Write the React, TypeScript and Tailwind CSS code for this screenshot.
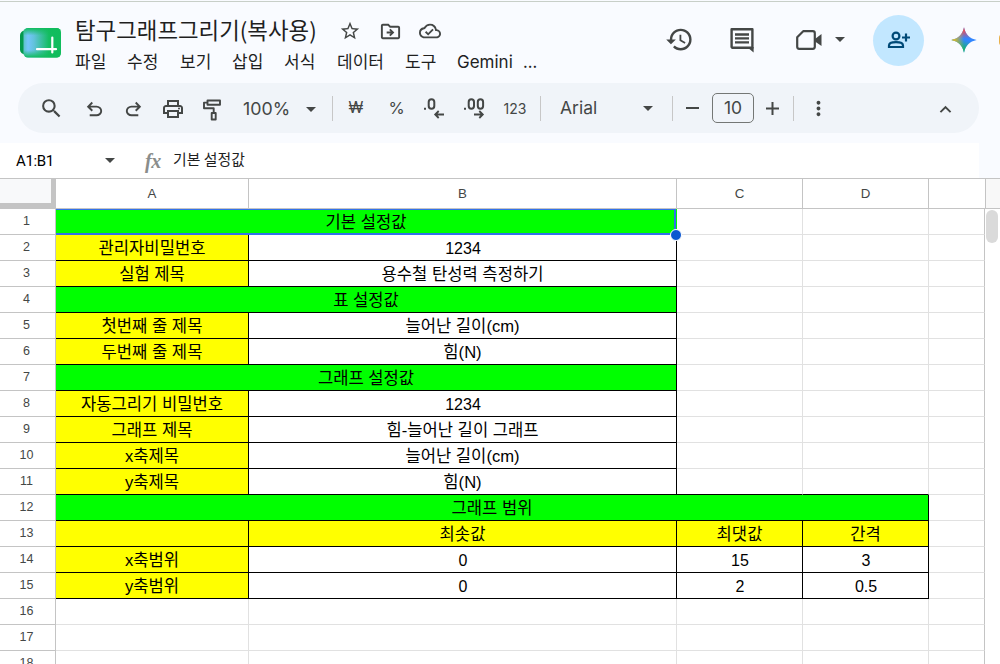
import type { ReactNode } from "react";
import clsx from "clsx";
import {
    MdArrowDropDown,
    MdHistory,
    MdKeyboardArrowUp,
    MdMoreVert,
    MdOutlineCloudDone,
    MdOutlineDriveFileMove,
    MdOutlinePrint,
    MdSearch,
    MdStarBorder,
} from "react-icons/md";

const menus = [
    { label: "파일", width: "w-[52px]" },
    { label: "수정", width: "w-[53px]" },
    { label: "보기", width: "w-[52px]" },
    { label: "삽입", width: "w-[52px]" },
    { label: "서식", width: "w-[53px]" },
    { label: "데이터", width: "w-[68px]" },
    { label: "도구", width: "w-[52px]" },
];

type CellData = { text?: string; fill?: "green" | "yellow"; span?: number; box?: boolean };

const title = (text: string, span = 2): CellData => ({ text, fill: "green", span, box: true });
const label = (text: string): CellData => ({ text, fill: "yellow", box: true });
const value = (text: string): CellData => ({ text, box: true });

// columns that a row does not list stay blank
const rows: CellData[][] = [
    [title("기본 설정값")],
    [label("관리자비밀번호"), value("1234")],
    [label("실험 제목"), value("용수철 탄성력 측정하기")],
    [title("표 설정값")],
    [label("첫번째 줄 제목"), value("늘어난 길이(cm)")],
    [label("두번째 줄 제목"), value("힘(N)")],
    [title("그래프 설정값")],
    [label("자동그리기 비밀번호"), value("1234")],
    [label("그래프 제목"), value("힘-늘어난 길이 그래프")],
    [label("x축제목"), value("늘어난 길이(cm)")],
    [label("y축제목"), value("힘(N)")],
    [title("그래프 범위", 4)],
    [label(""), label("최솟값"), label("최댓값"), label("간격")],
    [label("x축범위"), value("0"), value("15"), value("3")],
    [label("y축범위"), value("0"), value("2"), value("0.5")],
    [],
    [],
    [],
];

const gridCols = "grid grid-cols-[56px_193px_428px_126px_126px_56px]";

const countColumns = (cells: CellData[] = []) => cells.reduce((sum, cell) => sum + (cell.span ?? 1), 0);

const Slot = ({ className, children }: { className: string; children?: ReactNode }) => (
    <div className={clsx("flex h-full shrink-0 items-center justify-center", className)}>{children}</div>
);

const Divider = () => <div className="h-[25px] w-px shrink-0 bg-[#c7c7c7]" />;

const Caret = () => (
    <svg width="10" height="5" viewBox="0 0 10 5" fill="#444746">
        <path d="M0 0h10L5 5z" />
    </svg>
);

const Logo = () => (
    <svg width="42" height="32" viewBox="0 0 42 32">
        <defs>
            <linearGradient id="sheet" x1="0" x2="1" y1="0" y2="0">
                <stop offset="0" stopColor="#5cc3c8" />
                <stop offset=".12" stopColor="#74c5fb" />
                <stop offset=".28" stopColor="#62c2dc" />
                <stop offset=".68" stopColor="#13bd60" />
                <stop offset="1" stopColor="#11bc5c" />
            </linearGradient>
            <linearGradient id="edge" x1="0" x2="0" y1="0" y2="1">
                <stop offset="0" stopColor="#11bc5c" />
                <stop offset=".25" stopColor="#11bc5c" stopOpacity="0" />
                <stop offset=".75" stopColor="#11bc5c" stopOpacity="0" />
                <stop offset="1" stopColor="#11bc5c" />
            </linearGradient>
        </defs>
        <rect x="0" y="3.5" width="20" height="24" rx="5" fill="#04994e" />
        <rect x="3.5" y="1" width="37.5" height="29.5" rx="4.5" fill="url(#sheet)" />
        <rect x="3.5" y="1" width="37.5" height="29.5" rx="4.5" fill="url(#edge)" />
        <path d="M17 22.2h19M32.3 10.5v15" stroke="#fff" strokeWidth="2.2" strokeLinecap="round" />
    </svg>
);

const Header = () => {
    return (
        <header className="flex h-20 overflow-hidden border-t border-transparent">
            <div className="w-[75px] shrink-0 pl-5 pt-[26px]">
                <Logo />
            </div>
            <div className="w-[584px] shrink-0">
                <div className="flex h-12 items-center pt-2">
                    <h1 className="w-[264px] whitespace-nowrap pb-px text-[22.4px] leading-7 text-[#1f1f1f]">탐구그래프그리기(복사용)</h1>
                    <div className="flex gap-[17.5px] pt-1 text-[#444746]">
                        <MdStarBorder size={22} />
                        <MdOutlineDriveFileMove size={23} />
                        <MdOutlineCloudDone size={22} />
                    </div>
                </div>
                <nav className="flex whitespace-nowrap text-[17px] leading-6 text-[#1f1f1f]">
                    {menus.map((menu) => (
                        <span key={menu.label} className={menu.width}>{menu.label}</span>
                    ))}
                    <span className="w-[66px] pt-px font-['Inter',sans-serif] text-[17px]">Gemini</span>
                    <span>...</span>
                </nav>
            </div>
            <div className="flex h-[78px] grow items-center text-[#444746]">
                <Slot className="w-10 pb-0.5"><MdHistory size={29} /></Slot>
                <Slot className="w-[85px]">
                    <svg width="26" height="26" viewBox="0 0 26 26" fill="none" stroke="currentColor">
                        <path d="M2.6 2.3h20.8v18.5H3.4l-.8-.8z" strokeWidth="2.4" strokeLinejoin="round" />
                        <path d="M18 20h6.6v5.5z" fill="currentColor" stroke="none" />
                        <path d="M6 7.5h14M6 11.4h14M6 15.3h14" strokeWidth="2.3" />
                    </svg>
                </Slot>
                <Slot className="w-[50px]">
                    <svg width="28" height="22" viewBox="0 0 28 22" fill="none" stroke="currentColor" strokeWidth="2.2" strokeLinejoin="round">
                        <path d="M8.2 2.2h9.6q2 0 2 2v13.6q0 2-2 2H4.2q-2 0-2-2V8.2z" />
                        <path d="M20 10 26.5 5v12L20 12.5z" fill="currentColor" stroke="none" />
                    </svg>
                </Slot>
                <Slot className="w-3 pb-0.5"><Caret /></Slot>
                <div className="ml-[27px] flex size-[51px] shrink-0 items-center justify-center rounded-full bg-[#c2e7ff]">
                    <svg width="24" height="18" viewBox="0 0 24 18" fill="none" stroke="#004a77" strokeWidth="2.2">
                        <circle cx="9" cy="5" r="3.4" />
                        <path d="M2 16v-1.5q0-3.3 7-3.3t7 3.3V16zM19 2.5v8M15 6.5h8" />
                    </svg>
                </div>
                <Slot className="ml-[26px] w-[27px]">
                    <svg width="26" height="26" viewBox="0 0 26 26">
                        <defs>
                            <linearGradient id="gemTop" x1=".5" y1="0" x2=".5" y2=".45">
                                <stop offset=".25" stopColor="#ef4a55" />
                                <stop offset="1" stopColor="#ef4a55" stopOpacity="0" />
                            </linearGradient>
                            <linearGradient id="gemLeft" x1="0" y1=".5" x2=".5" y2=".5">
                                <stop offset=".1" stopColor="#f5bd10" />
                                <stop offset="1" stopColor="#f5bd10" stopOpacity="0" />
                            </linearGradient>
                            <linearGradient id="gemBottom" x1=".42" y1="1" x2=".58" y2=".5">
                                <stop offset=".2" stopColor="#12b75d" />
                                <stop offset="1" stopColor="#12b75d" stopOpacity="0" />
                            </linearGradient>
                        </defs>
                        {["#3186ff", "url(#gemTop)", "url(#gemBottom)", "url(#gemLeft)"].map((fill) => (
                            <path key={fill} fill={fill} d="M13 .3C14.3 7.3 18.7 11.7 25.7 13C18.7 14.3 14.3 18.7 13 25.7C11.7 18.7 7.3 14.3.3 13C7.3 11.7 11.7 7.3 13 .3z" />
                        ))}
                    </svg>
                </Slot>
                <div className="ml-[22px] h-3 w-2 shrink-0 rounded-l-sm bg-[#e8b04a]" />
            </div>
        </header>
    );
};

const Toolbar = () => {
    return (
        <div className="ml-[18px] mt-[3px] flex h-[50px] w-[961px] items-center rounded-full bg-[#f0f4f9] pl-2.5 font-['Inter',sans-serif] text-[#444746]">
            <Slot className="w-[46px]"><MdSearch size={25} /></Slot>
            <Slot className="w-[41px] pt-0.5">
                <svg width="23" height="23" viewBox="0 -960 960 960" fill="currentColor">
                    <path d="M280-200v-80h284q63 0 109.5-40T720-420q0-60-46.5-100T564-560H312l104 104-56 56-200-200 200-200 56 56-104 104h252q97 0 166.5 63T800-420q0 94-69.5 157T564-200H280Z" />
                </svg>
            </Slot>
            <Slot className="w-[37px] pt-0.5">
                <svg width="23" height="23" viewBox="0 -960 960 960" fill="currentColor">
                    <path d="M396-200q-97 0-166.5-63T160-420q0-94 69.5-157T396-640h252L544-744l56-56 200 200-200 200-56-56 104-104H396q-63 0-109.5 40T240-420q0 60 46.5 100T396-280h284v80H396Z" />
                </svg>
            </Slot>
            <Slot className="w-[42px] pt-0.5"><MdOutlinePrint size={24} /></Slot>
            <Slot className="w-[36px] pt-[3px]">
                <svg width="18" height="22" viewBox="0 0 18 22" fill="none" stroke="currentColor" strokeWidth="1.9" strokeLinejoin="round">
                    <rect x="4.5" y="1.5" width="12.5" height="4.2" />
                    <path d="M4.5 3.6H1v5.6h9.7V14" />
                    <rect x="8.7" y="14" width="4" height="6.5" />
                </svg>
            </Slot>
            <div className="flex w-[102px] items-center gap-4 pl-[13px] pt-0.5 text-[17.8px]">
                <span className="w-[47px]">100%</span>
                <Caret />
            </div>
            <Divider />
            <Slot className="w-[46px] text-[15.5px]">₩</Slot>
            <Slot className="w-[35px] text-[16.5px]">%</Slot>
            <Slot className="w-10">
                <svg width="22" height="21" viewBox="0 0 22 21" fill="none" stroke="currentColor" strokeWidth="2">
                    <path d="M1 10.8h2" />
                    <rect x="5.7" y="1.3" width="5.6" height="9.4" rx="2.8" />
                    <path d="M21 16.5h-8.5M15.7 13l-3.5 3.5 3.5 3.5" strokeWidth="1.8" />
                </svg>
            </Slot>
            <Slot className="w-[40px]">
                <svg width="22" height="21" viewBox="0 0 22 21" fill="none" stroke="currentColor" strokeWidth="2">
                    <path d="M1 10.8h2" />
                    <rect x="5.7" y="1.3" width="5.3" height="9.4" rx="2.65" />
                    <rect x="14.8" y="1.3" width="5.3" height="9.4" rx="2.65" />
                    <path d="M11 16.5h8.5M16.3 13l3.5 3.5-3.5 3.5" strokeWidth="1.8" />
                </svg>
            </Slot>
            <Slot className="w-[46px] pr-1 text-[14px]">123</Slot>
            <Divider />
            <div className="flex w-[131px] items-center pl-[19px] text-[17.5px]">
                <span className="w-[83px]">Arial</span>
                <Caret />
            </div>
            <Divider />
            <Slot className="w-[39px]"><div className="h-0.5 w-[13px] bg-[#444746]" /></Slot>
            <div className="flex h-[30px] w-[42px] shrink-0 items-center justify-center rounded-[5px] border border-[#747775] text-[17.5px]">10</div>
            <Slot className="w-9">
                <svg width="13" height="13" viewBox="0 0 13 13" stroke="currentColor" strokeWidth="2">
                    <path d="M0 6.5h13M6.5 0v13" />
                </svg>
            </Slot>
            <div className="w-[3px]" />
            <Divider />
            <Slot className="w-12 pt-px"><MdMoreVert size={23} /></Slot>
            <Slot className="ml-auto w-[68px] pt-0.5"><MdKeyboardArrowUp size={23} /></Slot>
        </div>
    );
};

const FormulaBar = () => {
    return (
        <div className="mt-2.5 flex h-[35px] w-[979px] items-center bg-white pl-4 text-[#1f1f1f]">
            <span className="w-[89px] pt-px font-['Roboto',sans-serif] text-[15px] tracking-tight text-black">A1:B1</span>
            <Caret />
            <span className="ml-[30px] w-7 font-['Liberation_Serif',serif] text-[20px] font-bold italic tracking-tight text-[#8a8d8b]">fx</span>
            <span className="pb-[3px] text-[14.9px]">기본 설정값</span>
        </div>
    );
};

const Cell = ({ cell, selected }: { cell: CellData; selected?: boolean }) => {
    return (
        <div
            className={clsx(
                "relative flex items-center justify-center whitespace-nowrap border-b border-r text-black",
                cell.box ? "border-black" : "border-[#e1e1e1]",
                cell.fill === "green" && "bg-[#00ff00]",
                cell.fill === "yellow" && "bg-[#ffff00]",
                cell.span === 2 && "col-span-2",
                cell.span === 4 && "col-span-4",
                /^[\d.]+$/.test(cell.text ?? "") ? "pl-px pt-0.5 text-[16px] leading-5" : "pt-[3px] text-[16.6px] leading-[22px]"
            )}
        >
            {cell.text}
            {selected && (
                <>
                    <div className="absolute -bottom-px left-0 right-0 top-0 border-b-2 border-r-2 border-t border-[#3271ea]" />
                    <div className="absolute -right-px -bottom-px top-0 w-px bg-[#00ff00]" />
                    <div className="absolute -bottom-[7px] -right-[6px] z-10 size-3 rounded-full border border-white bg-[#0b57d0]" />
                </>
            )}
        </div>
    );
};

const Row = ({ cells, index }: { cells: CellData[]; index: number }) => {
    const used = countColumns(cells);
    const nextUsed = countColumns(rows[index + 1]);

    return (
        <div className={clsx(gridCols, "h-[26px] grid-rows-[26px]")}>
            <div className="flex items-center justify-center border-b border-r border-[#c4c4c4] pb-px pr-0.5 text-[12.5px] leading-4 text-[#444746]">
                {index + 1}
            </div>
            {cells.map((cell, i) => (
                <Cell key={i} cell={cell} selected={index === 0} />
            ))}
            {Array.from({ length: 5 - used }, (_, i) => {
                const col = used + i;
                return (
                    <div
                        key={col}
                        className={clsx(
                            "border-b border-r",
                            // top edge of a wider block that starts in the next row
                            col < nextUsed ? "border-b-black" : "border-b-[#e1e1e1]",
                            col === 4 ? "border-r-[#c4c4c4]" : "border-r-[#e1e1e1]"
                        )}
                    />
                );
            })}
        </div>
    );
};

const Sheet = () => {
    return (
        <main className="flex h-[486px] border-t border-[#c4c4c4] bg-white font-['Liberation_Sans','Noto_Sans_CJK_KR',sans-serif]">
            <div className="w-[985px] shrink-0">
                <div className={clsx(gridCols, "h-[30px] text-[13.3px] text-[#444746]")}>
                    <div className="border-b-[6px] border-r-[5px] border-[#c4c4c4] bg-[#f8f9fa]" />
                    {["A", "B", "C", "D"].map((name) => (
                        <div key={name} className="flex items-center justify-center border-b border-r border-[#c4c4c4]">{name}</div>
                    ))}
                    <div className="border-b border-[#c4c4c4]" />
                </div>
                {rows.map((cells, i) => (
                    <Row key={i} cells={cells} index={i} />
                ))}
            </div>
            <div className="grow">
                <div className="h-[30px] border-b border-l border-[#c4c4c4] bg-[#f8f8f8]" />
                <div className="ml-px mt-px h-[33px] w-3 rounded-full bg-[#dadada]" />
            </div>
        </main>
    );
};

export default function App() {
    return (
        <div className="h-[664px] w-[1000px] overflow-hidden border-t border-[#f9fbff] bg-[#f9fbff] font-['Noto_Sans_CJK_KR',sans-serif]">
            <div className="h-px bg-[#c8cfc8]" />
            <div className="-mt-0.5">
                <Header />
                <Toolbar />
                <FormulaBar />
                <Sheet />
            </div>
        </div>
    );
}
